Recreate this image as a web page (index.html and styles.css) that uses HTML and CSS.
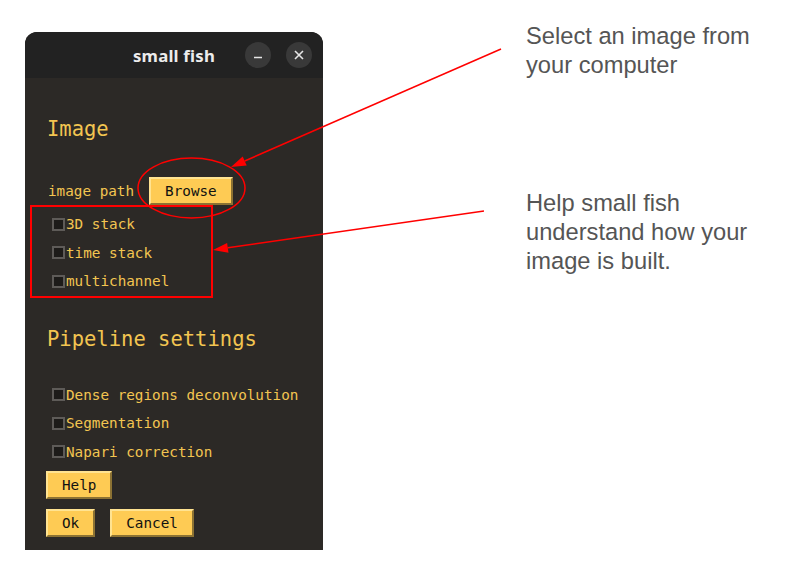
FILE: index.html
```html
<!DOCTYPE html>
<html>
<head>
<meta charset="utf-8">
<link rel="stylesheet" href="styles.css">
</head>
<body>
<div class="page">
  <div class="window">
    <div class="titlebar">
      <div></div>
      <div class="title">small fish</div>
      <div class="wbtns">
        <span class="wbtn"><svg width="26" height="26" viewBox="0 0 26 26"><line x1="9" y1="15.5" x2="17" y2="15.5" stroke="#e6e6e6" stroke-width="1.6"/></svg></span>
        <span class="wbtn"><svg width="26" height="26" viewBox="0 0 26 26"><path d="M9 9 L17 17 M17 9 L9 17" stroke="#e6e6e6" stroke-width="1.6"/></svg></span>
      </div>
    </div>
    <div class="content">
      <div class="heading h-image">Image</div>
      <div class="pathrow">
        <span class="label">image path</span>
        <button class="btn">Browse</button>
      </div>
      <div class="checks first">
        <div class="check"><span class="box"></span>3D stack</div>
        <div class="check"><span class="box"></span>time stack</div>
        <div class="check"><span class="box"></span>multichannel</div>
      </div>
      <div class="heading h-pipe">Pipeline settings</div>
      <div class="checks second">
        <div class="check"><span class="box"></span>Dense regions deconvolution</div>
        <div class="check"><span class="box"></span>Segmentation</div>
        <div class="check"><span class="box"></span>Napari correction</div>
      </div>
      <div class="btnrow help"><button class="btn">Help</button></div>
      <div class="btnrow final"><button class="btn">Ok</button><button class="btn">Cancel</button></div>
    </div>
  </div>
  <div class="notes">
    <p class="note n1">Select an image from<br>your computer</p>
    <p class="note n2">Help small fish<br>understand how your<br>image is built.</p>
  </div>
</div>
<svg class="overlay" width="796" height="563" viewBox="0 0 796 563">
  <g fill="none" stroke="#f00" stroke-width="1.5">
    <ellipse cx="191.5" cy="188" rx="53.5" ry="30"/>
    <rect x="31" y="206" width="181" height="91" stroke-width="2"/>
    <line x1="501" y1="49" x2="244.7" y2="161"/>
    <line x1="484" y1="211" x2="227.8" y2="247.8"/>
  </g>
  <g fill="#f00">
    <polygon points="231,167 246.7,165.6 242.7,156.4"/>
    <polygon points="213,250 228.5,252.8 227.1,242.9"/>
  </g>
</svg>
</body>
</html>
```
FILE: styles.css
```css
html, body {
  margin: 0;
  padding: 0;
  background: #ffffff;
}
body {
  width: 796px;
  height: 563px;
  overflow: hidden;
  position: relative;
}
.page {
  display: flex;
  align-items: flex-start;
}
.window {
  margin-left: 25px;
  margin-top: 32px;
  width: 298px;
  height: 518px;
  background: #2c2926;
  border-radius: 12px 12px 0 0;
  overflow: hidden;
  display: flex;
  flex-direction: column;
}
.titlebar {
  height: 46px;
  background: #222222;
  display: grid;
  grid-template-columns: 1fr auto 1fr;
  align-items: center;
  flex: none;
}
.title {
  font-family: "Noto Sans", "DejaVu Sans", sans-serif;
  font-weight: 700;
  font-size: 16.8px;
  color: #ececec;
  letter-spacing: 0.2px;
}
.wbtns {
  display: flex;
  justify-content: flex-end;
  gap: 15px;
  padding-right: 11px;
}
.wbtn {
  width: 26px;
  height: 26px;
  border-radius: 50%;
  background: #393939;
  display: block;
}
.wbtn svg { display: block; }
.content {
  display: flex;
  flex-direction: column;
  align-items: flex-start;
  padding-left: 21px;
  font-family: "DejaVu Sans Mono", "Liberation Mono", monospace;
  font-size: 14.3px;
  color: #f3c551;
}
.heading {
  font-size: 20.5px;
  line-height: 24px;
  height: 24px;
  padding-left: 1px;
}
.h-image { margin-top: 39px; }
.h-pipe { margin-top: 31px; }
.pathrow {
  margin-top: 36px;
  display: flex;
  align-items: center;
  gap: 15px;
  padding-left: 2px;
}
.label { line-height: 28px; }
.btn {
  font-family: "DejaVu Sans Mono", "Liberation Mono", monospace;
  font-size: 14.3px;
  color: #111;
  background: #fecb54;
  height: 28px;
  padding: 0 14px;
  margin: 0;
  border: 2px solid;
  border-color: #ffe391 #8c7233 #8c7233 #ffe391;
  line-height: 22px;
  box-sizing: border-box;
}
.checks {
  display: flex;
  flex-direction: column;
  padding-left: 6px;
}
.checks.first { margin-top: 5px; }
.checks.second { margin-top: 30px; }
.check {
  height: 28.5px;
  display: flex;
  align-items: center;
  line-height: 18px;
}
.box {
  width: 13px;
  height: 13px;
  box-sizing: border-box;
  border: 2px solid #5e5b58;
  background: #1d1b19;
  margin-right: 1px;
  flex: none;
}
.btnrow {
  display: flex;
  gap: 15px;
}
.help { margin-top: 5px; }
.final { margin-top: 10px; }
.notes {
  margin-left: 203px;
  display: flex;
  flex-direction: column;
}
.note {
  margin: 0;
  font-family: "Liberation Sans", Arial, sans-serif;
  font-size: 23.7px;
  line-height: 28.7px;
  color: #555555;
}
.n1 { margin-top: 22px; }
.n2 { margin-top: 110px; }
.overlay {
  position: absolute;
  left: 0;
  top: 0;
  pointer-events: none;
}
```
